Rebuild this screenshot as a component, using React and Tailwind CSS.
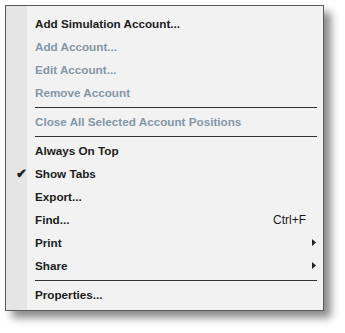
import { Check } from 'lucide-react'

const items = [
  { label: 'Add Simulation Account...' },
  { label: 'Add Account...', disabled: true },
  { label: 'Edit Account...', disabled: true },
  { label: 'Remove Account', disabled: true },
  { sep: true },
  { label: 'Close All Selected Account Positions', disabled: true },
  { sep: true },
  { label: 'Always On Top' },
  { label: 'Show Tabs', checked: true },
  { label: 'Export...' },
  { label: 'Find...', shortcut: 'Ctrl+F' },
  { label: 'Print', submenu: true },
  { label: 'Share', submenu: true },
  { sep: true },
  { label: 'Properties...' },
]

function Arrow() {
  return (
    <svg width="4" height="7" viewBox="0 0 4 7" className="block">
      <path d="M0 0 L4 3.5 L0 7 Z" fill="#222" />
    </svg>
  )
}

export default function App() {
  return (
    <div className="w-[345px] h-[333px] bg-white pt-[5px] pl-[5px]" style={{ fontFamily: '"Liberation Sans", Arial, sans-serif' }}>
      <div className="relative w-[319px] h-[306px] border border-[#5a5a5a] bg-[#f2f2f2] shadow-[7px_7px_8px_rgba(0,0,0,0.45)] pt-[6px]">
        <div className="absolute left-0 top-0 bottom-0 w-[21px] bg-[#e5e5e5]" />
        <div className="relative">
          {items.map((it, i) => it.sep ? (
            <div key={i} className="h-[6px] flex items-center pl-[29px] pr-[6px]">
              <div className="h-px w-full bg-[#333]" />
            </div>
          ) : (
            <div key={i} className="h-[23px] flex items-center">
              <div className="w-[29px] flex justify-center pl-[1px]">
                {it.checked && <span className="text-[13px] leading-none text-[#222] font-bold">✔</span>}
              </div>
              <span className={`text-[11.7px] font-bold ${it.disabled ? 'text-[#8397a9]' : 'text-[#1c1c1c]'}`}>{it.label}</span>
              <div className="flex-1" />
              {it.shortcut && <span className="text-[12px] text-[#1c1c1c] mr-[17px]">{it.shortcut}</span>}
              {it.submenu && <div className="mr-[7px]"><Arrow /></div>}
            </div>
          ))}
        </div>
      </div>
    </div>
  )
}
